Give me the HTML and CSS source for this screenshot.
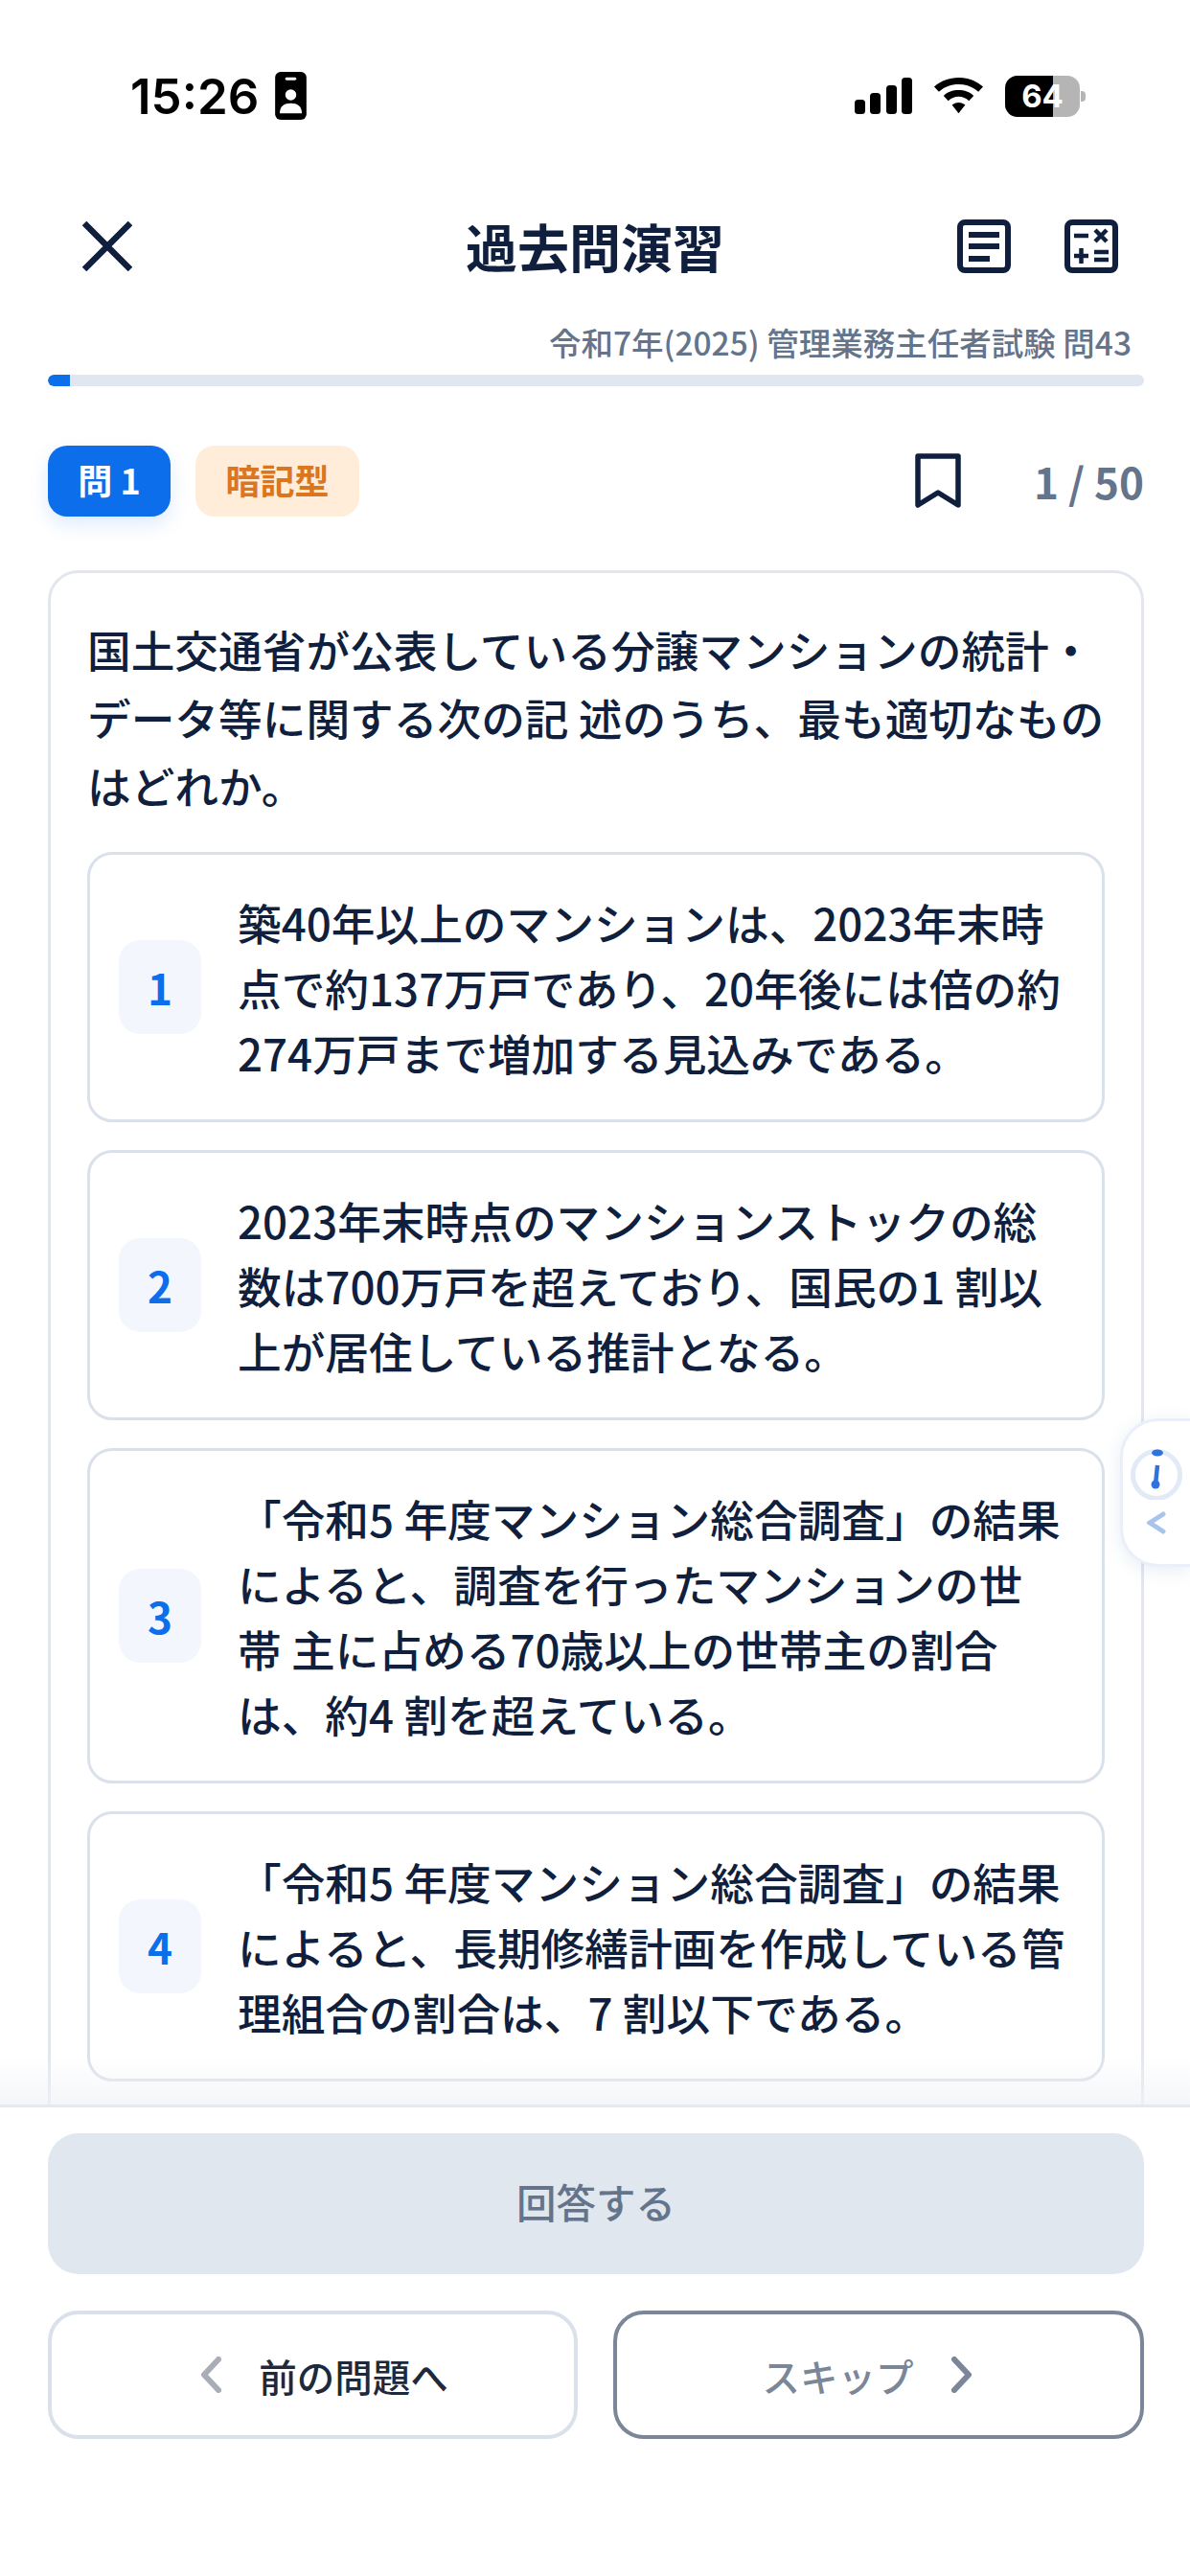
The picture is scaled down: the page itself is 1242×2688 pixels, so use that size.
FILE: index.html
```html
<!DOCTYPE html>
<html lang="ja">
<head>
    <meta charset="UTF-8">
    <meta name="viewport" content="width=device-width, initial-scale=1.0">
    <title>過去問演習</title>
    <link rel="stylesheet" href="styles.css">
</head>
<body>
    <div class="screen">
        <div class="status-bar">
            <div class="status-left">
                <span class="time">15:26</span>
                <svg class="id-icon" width="33" height="50" viewBox="0 0 34 52">
                    <rect x="0" y="0" width="34" height="52" rx="6" fill="#000"/>
                    <rect x="11" y="6" width="12" height="3" rx="1.5" fill="#fff"/>
                    <circle cx="17" cy="25" r="6" fill="#fff"/>
                    <path d="M5 45c0-8 5-11 12-11s12 3 12 11z" fill="#fff"/>
                </svg>
            </div>
            <div class="status-right">
                <svg width="60" height="38" viewBox="0 0 60 38" fill="#000">
                    <rect x="0" y="23" width="11" height="15" rx="3.5"/>
                    <rect x="16" y="16" width="11" height="22" rx="3.5"/>
                    <rect x="33" y="8" width="11" height="30" rx="3.5"/>
                    <rect x="49" y="0" width="11" height="38" rx="3.5"/>
                </svg>
                <svg width="53" height="38" viewBox="0 0 54 44" fill="#000" preserveAspectRatio="none">
                    <path d="M27 0c10 0 19 4 26 11l-5 6C42 11 35 8 27 8S12 11 6 17l-5-6C8 4 17 0 27 0z"/>
                    <path d="M27 15c6 0 12 2 16 7l-5 6c-3-3-7-5-11-5s-8 2-11 5l-5-6c4-5 10-7 16-7z"/>
                    <path d="M27 30c3 0 5 1 7 3l-7 10-7-10c2-2 4-3 7-3z"/>
                </svg>
                <div class="battery">
                    <div class="battery-body">
                        <div class="battery-fill"></div>
                        <span class="battery-text">64</span>
                    </div>
                    <div class="battery-tip"></div>
                </div>
            </div>
        </div>

        <div class="top-bar">
            <svg class="close-icon" width="52" height="52" viewBox="0 0 52 52" fill="none" stroke="#0f1f3d" stroke-width="6.5">
                <path d="M2 2l48 48M50 2L2 50"/>
            </svg>
            <h1>過去問演習</h1>
            <div class="top-icons">
                <svg width="56" height="56" viewBox="0 0 56 56" fill="none" stroke="#0f1f3d" stroke-width="6">
                    <rect x="3" y="3" width="50" height="50" rx="5"/>
                    <path d="M12 16h32M12 28h32M12 41h22"/>
                </svg>
                <svg width="56" height="56" viewBox="0 0 56 56" fill="none" stroke="#0f1f3d" stroke-width="6">
                    <rect x="3" y="3" width="50" height="50" rx="5"/>
                    <path stroke-width="4.5" d="M10 17h15M32 11l12 12M44 11L32 23M10 38h15M17.500 30v16M31 34h15M31 42h15"/>
                </svg>
            </div>
        </div>

        <div class="exam-name">令和7年(2025) 管理業務主任者試験 問43</div>
        <div class="progress"><div class="progress-fill"></div></div>

        <div class="meta-row">
            <span class="badge badge-blue">問 1</span>
            <span class="badge badge-orange">暗記型</span>
            <div class="meta-right">
                <svg width="48" height="58" viewBox="0 0 48 58" fill="none" stroke="#0f1f3d" stroke-width="5.5">
                    <path d="M3 3h42v51L24 41 3 54z" stroke-linejoin="round"/>
                </svg>
                <span class="count">1 / 50</span>
            </div>
        </div>

        <div class="scroll-area">
            <div class="card">
                <p class="question">国土交通省が公表している分譲マンションの統計・<br>データ等に関する次の記 述のうち、最も適切なもの<br>はどれか。</p>
                <div class="options">
                    <div class="option">
                        <div class="option-num">1</div>
                        <p class="option-text">築40年以上のマンションは、2023年末時<br>点で約137万戸であり、20年後には倍の約<br>274万戸まで増加する見込みである。</p>
                    </div>
                    <div class="option">
                        <div class="option-num">2</div>
                        <p class="option-text">2023年末時点のマンションストックの総<br>数は700万戸を超えており、国民の1 割以<br>上が居住している推計となる。</p>
                    </div>
                    <div class="option">
                        <div class="option-num">3</div>
                        <p class="option-text">「令和5 年度マンション総合調査」の結果<br>によると、調査を行ったマンションの世<br>帯 主に占める70歳以上の世帯主の割合<br>は、約4 割を超えている。</p>
                    </div>
                    <div class="option">
                        <div class="option-num">4</div>
                        <p class="option-text">「令和5 年度マンション総合調査」の結果<br>によると、長期修繕計画を作成している管<br>理組合の割合は、7 割以下である。</p>
                    </div>
                </div>
            </div>
            <div class="scroll-fade"></div>
        </div>

        <div class="bottom-bar">
            <div class="answer-btn">回答する</div>
            <div class="nav-row">
                <div class="nav-btn nav-prev">
                    <svg width="22" height="38" viewBox="0 0 22 38" fill="none" stroke="#a9adb5" stroke-width="6" stroke-linecap="round" stroke-linejoin="round">
                        <path d="M19 3L4 19l15 16"/>
                    </svg>
                    <span>前の問題へ</span>
                </div>
                <div class="nav-btn nav-skip">
                    <span>スキップ</span>
                    <svg width="22" height="38" viewBox="0 0 22 38" fill="none" stroke="#7b8698" stroke-width="6" stroke-linecap="round" stroke-linejoin="round">
                        <path d="M3 3l15 16L3 35"/>
                    </svg>
                </div>
            </div>
        </div>

        <!-- floating tab on the right edge -->
        <div class="side-tab">
            <svg width="56" height="56" viewBox="0 0 56 56" fill="none">
                <circle cx="28" cy="30" r="24.5" stroke="#e1eaf6" stroke-width="5"/>
                <ellipse cx="29" cy="7" rx="6" ry="3.5" fill="#2f74dc"/>
                <path d="M29 20l-2 20" stroke="#2f74dc" stroke-width="4.5"/>
                <circle cx="27" cy="40" r="4.5" fill="#2f74dc"/>
            </svg>
            <svg width="20" height="24" viewBox="0 0 20 24" fill="none" stroke="#a9c4ec" stroke-width="5" stroke-linecap="round">
                <path d="M17 3L3 12l14 9"/>
            </svg>
        </div>
    </div>
</body>
</html>
```

FILE: styles.css
```css
:root {
    --navy: #0f1f3d;
    --blue: #0d6eeb;
    --slate: #64748b;
    --line: #e2e7ef;
}

* {
    margin: 0;
    padding: 0;
    box-sizing: border-box;
}

body {
    width: 1242px;
    height: 2688px;
    overflow: hidden;
    background: #fff;
    color: var(--navy);
    font-family: "Noto Sans CJK JP", "Noto Sans", sans-serif;
}

.screen {
    position: relative;
    width: 1242px;
    height: 2688px;
    display: flex;
    flex-direction: column;
    overflow: hidden;
}

/* status bar */
.status-bar {
    height: 205px;
    padding: 74px 0 0 136px;
    display: flex;
    justify-content: space-between;
}

.status-left {
    display: flex;
    align-items: center;
    gap: 17px;
    height: 52px;
}

.time {
    font-family: Inter, "Liberation Sans", sans-serif;
    font-size: 51px;
    font-weight: 600;
    color: #000;
}

.status-right {
    display: flex;
    align-items: center;
    gap: 22px;
    height: 52px;
    padding-right: 109px;
}

.battery {
    display: flex;
    align-items: center;
    gap: 1px;
}

.battery-body {
    position: relative;
    width: 78px;
    height: 43px;
    border-radius: 13px;
    background: #b5b5b5;
    overflow: hidden;
}

.battery-fill {
    width: 50px;
    height: 100%;
    background: #000;
}

.battery-text {
    position: absolute;
    inset: 0;
    text-align: center;
    line-height: 43px;
    font-family: Inter, "Liberation Sans", sans-serif;
    font-size: 33px;
    font-weight: 700;
    color: #fff;
}

.battery-tip {
    width: 5px;
    height: 11px;
    border-radius: 0 4px 4px 0;
    background: #b5b5b5;
}

/* header */
.top-bar {
    position: relative;
    height: 104px;
    padding: 0 50px 0 86px;
    display: flex;
    align-items: center;
    justify-content: space-between;
}

.top-bar h1 {
    position: absolute;
    left: 0;
    right: 0;
    text-align: center;
    font-size: 54px;
    font-weight: 700;
    line-height: 104px;
}

.top-icons {
    display: flex;
    gap: 56px;
    padding-right: 25px;
}

.exam-name {
    margin-top: 26px;
    padding-right: 61px;
    height: 44px;
    line-height: 44px;
    text-align: right;
    font-size: 33.5px;
    font-weight: 500;
    color: var(--slate);
}

.progress {
    height: 12px;
    margin: 12px 48px 0 50px;
    border-radius: 6px;
    background: #e1e7f1;
    overflow: hidden;
}

.progress-fill {
    width: 23px;
    height: 100%;
    background: var(--blue);
    border-radius: 6px 0 0 6px;
}

.meta-row {
    height: 74px;
    margin: 62px 48px 0 50px;
    display: flex;
    align-items: center;
    gap: 26px;
}

.badge {
    height: 74px;
    line-height: 70px;
    border-radius: 20px;
    font-size: 36px;
    font-weight: 700;
    text-align: center;
}

.badge-blue {
    width: 128px;
    background: var(--blue);
    color: #fff;
    box-shadow: 0 8px 20px rgba(13, 110, 235, 0.14);
}

.badge-orange {
    width: 171px;
    background: #ffedd9;
    color: #dc7520;
}

.meta-right {
    margin-left: auto;
    display: flex;
    align-items: center;
    gap: 76px;
}

.count {
    font-size: 44px;
    font-weight: 600;
    color: var(--slate);
}

/* question card */
.scroll-area {
    position: relative;
    flex: 1;
    min-height: 0;
    margin-top: 56px;
    padding: 0 48px 0 50px;
    overflow: hidden;
}

.card {
    height: 1800px;
    padding: 44px 38px 0;
    border: 3px solid var(--line);
    border-radius: 32px;
    background: #fff;
}

.question {
    font-size: 45.7px;
    font-weight: 500;
    line-height: 71px;
    white-space: nowrap;
}

.options {
    margin-top: 34px;
    display: flex;
    flex-direction: column;
    gap: 29px;
}

.option {
    display: flex;
    align-items: center;
    gap: 38px;
    padding: 36px 30px;
    border: 3px solid #dbe1ea;
    border-radius: 26px;
}

.option-num {
    flex: none;
    width: 86px;
    height: 98px;
    line-height: 98px;
    border-radius: 22px;
    background: #f3f7fd;
    text-align: center;
    font-size: 44px;
    font-weight: 700;
    color: var(--blue);
}

.option-text {
    font-size: 45.7px;
    font-weight: 500;
    line-height: 68px;
    white-space: nowrap;
}

.scroll-fade {
    position: absolute;
    left: 0;
    right: 0;
    bottom: 0;
    height: 50px;
    background: linear-gradient(rgba(240, 242, 246, 0), rgba(240, 242, 246, 0.7));
}

/* bottom buttons */
.bottom-bar {
    height: 492px;
    padding: 27px 48px 0 50px;
    border-top: 3px solid #e6e9ef;
    background: #fff;
}

.answer-btn {
    height: 147px;
    line-height: 143px;
    border-radius: 32px;
    background: #e0e7ef;
    text-align: center;
    font-size: 41.5px;
    font-weight: 500;
    color: var(--slate);
}

.nav-row {
    margin-top: 38px;
    display: grid;
    grid-template-columns: 553px 554px;
    gap: 37px;
}

.nav-btn {
    height: 134px;
    border-radius: 32px;
    display: flex;
    align-items: center;
    justify-content: center;
    gap: 39px;
    font-size: 39.5px;
    font-weight: 500;
}

.nav-prev {
    padding-left: 24px;
    border: 4px solid #dbe1ea;
    color: #1e293b;
}

.nav-skip {
    padding-right: 24px;
    border: 4px solid #7b8698;
    color: #7b8698;
}

/* side tab */
.side-tab {
    position: absolute;
    top: 1480px;
    right: 0;
    width: 73px;
    height: 155px;
    padding-top: 26px;
    border: 3px solid #e9f0fa;
    border-right: 0;
    border-radius: 40px 0 0 40px;
    background: #fff;
    box-shadow: 0 4px 18px rgba(120, 150, 200, 0.18);
    display: flex;
    flex-direction: column;
    align-items: center;
    gap: 12px;
}
```
